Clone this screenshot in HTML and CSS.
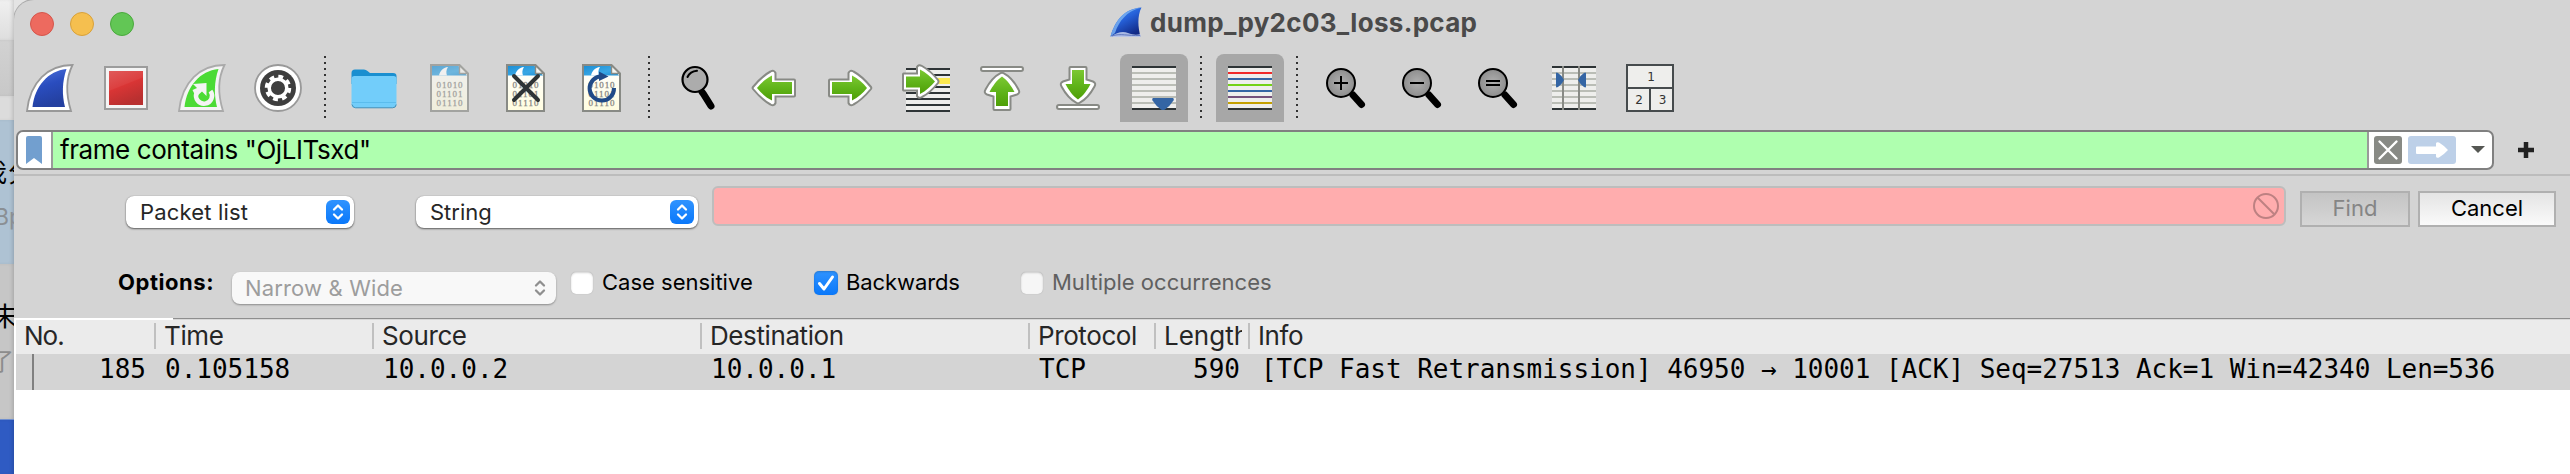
FILE: index.html
```html
<!DOCTYPE html>
<html lang="en">
<head>
<meta charset="utf-8">
<title>dump_py2c03_loss.pcap</title>
<link rel="stylesheet" href="styles.css">
</head>
<body>
<svg class="defs" width="0" height="0" aria-hidden="true">
  <defs>
    <linearGradient id="g-blue" x1="0" y1="0" x2="0.3" y2="1"><stop offset="0" stop-color="#4f74dc"/><stop offset=".5" stop-color="#2a4dbf"/><stop offset="1" stop-color="#2440a0"/></linearGradient>
    <linearGradient id="g-red" x1="0" y1="0" x2=".4" y2="1"><stop offset="0" stop-color="#e05a5a"/><stop offset=".49" stop-color="#dc4040"/><stop offset=".52" stop-color="#d93535"/><stop offset="1" stop-color="#b93030"/></linearGradient>
    <linearGradient id="g-green" x1="0" y1="0" x2="0" y2="1"><stop offset="0" stop-color="#7cc832"/><stop offset=".5" stop-color="#60b41a"/><stop offset="1" stop-color="#4e9e06"/></linearGradient>
    <linearGradient id="g-sky" x1="0" y1="0" x2="1" y2="1"><stop offset="0" stop-color="#1c8fd6"/><stop offset=".6" stop-color="#39a7e4"/><stop offset="1" stop-color="#1c8fd6"/></linearGradient>
    <linearGradient id="g-paper" x1="0" y1="0" x2="0" y2="1"><stop offset="0" stop-color="#ffffff"/><stop offset="1" stop-color="#fffde0"/></linearGradient>
    <linearGradient id="g-title" x1="0" y1="0" x2=".6" y2="1"><stop offset="0" stop-color="#4a9af5"/><stop offset=".5" stop-color="#2560d8"/><stop offset="1" stop-color="#122a86"/></linearGradient>
    <radialGradient id="g-lens"><stop offset="0" stop-color="#b0b0b0"/><stop offset="1" stop-color="#8e8e8e"/></radialGradient>
    <symbol id="file" viewBox="0 0 48 48">
      <path d="M5 1H33L42 10V47H5Z" fill="url(#g-paper)"/>
      <path d="M6 2H32.500L41 11.500H6Z" fill="url(#g-sky)"/>
      <path d="M13 11.500C14 7 17 3.500 22 3C20 6 20 9 21 11.500Z" fill="#fff"/>
      <path d="M5 1H33.500L42 9.500V47H5Z" fill="none" stroke="#888a85" stroke-width="2"/>
      <path d="M33.500 1.500V9.500H41.500Z" fill="#f4f4f0" stroke="#888a85" stroke-width="1.400"/>
      <g class="bits"><text x="10.500" y="23.500" textLength="26">01010</text><text x="10.500" y="32.500" textLength="26">01101</text><text x="10.500" y="41.500" textLength="26">01110</text></g>
    </symbol>
    <symbol id="arrow" viewBox="0 0 48 48">
      <path d="M4 15.500H22.500V9Q24 5.500 27.500 7.500C34 11 40 17 45 23Q45.800 24 45 25C40 31 34 37 27.500 40.500Q24 42.500 22.500 39V32.500H4Q3 32.500 3 31.500V16.500Q3 15.500 4 15.500Z" fill="#fff" stroke="#888a85" stroke-width="2"/>
      <path d="M6 18H26V11.500C32 14.500 37 19 41 24C37 29 32 33.500 26 36.500V30H6Z" fill="url(#g-green)"/>
    </symbol>
    <symbol id="arrow-up" viewBox="0 0 48 48">
      <path d="M15.500 45V32.500L9 30.500Q5.500 29 7.500 25.500C11 19 17 12 22.500 9.200Q24 8.500 25.500 9.200C31 12 37 19 40.500 25.500Q42.500 29 39 30.500L32.500 32.500V45Q32.500 46 31.500 46H16.500Q15.500 46 15.500 45Z" fill="#fff" stroke="#888a85" stroke-width="2"/>
      <path d="M18 42V28H11.500C14.500 22 19 16 24 12.500C29 16 33.500 22 36.500 28H30V42Z" fill="url(#g-green)"/>
      <rect x="3" y="3" width="42" height="4" rx="2" fill="#fff" stroke="#888a85" stroke-width="2"/>
    </symbol>
    <symbol id="lens" viewBox="0 0 48 48">
      <path d="M31 31L39.500 40.500" stroke="#000" stroke-width="7" stroke-linecap="round"/>
      <circle cx="19" cy="19" r="14" fill="url(#g-lens)" stroke="#000" stroke-width="2"/>
    </symbol>
    <symbol id="updown" viewBox="0 0 24 24"><path d="M8 9.500L12 5.500L16 9.500M8 14.500L12 18.500L16 14.500" fill="none" stroke="currentColor" stroke-width="2.300" stroke-linecap="round" stroke-linejoin="round"/></symbol>
  </defs>
</svg>
<div class="desktop">
  <div class="behind">
    <div class="b b1"></div><div class="b b2"></div><div class="b b3"></div>
    <div class="b b4"><span class="cj cj-name">我</span><span class="cj cj-name2">分</span><span class="cj cj-sub">Bp</span></div>
    <div class="b b5"><span class="cj cj-mo">末</span><span class="cj cj-le">了</span></div>
    <div class="b b6"></div>
  </div>
  <div class="window">
    <div class="titlebar">
      <div class="lights"><i class="light red"></i><i class="light yellow"></i><i class="light green"></i></div>
      <div class="title">
        <svg class="title-icon" viewBox="0 0 32 32"><path d="M.5 29.500C5 14 14 1.500 31.500 .500C27 9 28 21 30.500 29.500Z" fill="url(#g-title)"/><path d="M.5 29.500C5 14 14 2 30 1C17 4 9 14 5 26Z" fill="#7db4f2" opacity=".8"/><path d="M.5 30C7 25 13 24 18 26C23 28 27 28 30.500 27V30Z" fill="#c4d0f0" opacity=".85"/><path d="M2 29C10 26 18 29 30 28.500" stroke="#5f78c0" fill="none"/></svg>
        <span class="title-text">dump_py2c03_loss.pcap</span>
      </div>
    </div>
    <div class="toolbar">
      <span class="tool"><svg viewBox="0 0 48 48"><path d="M1 47C4 18 22 1 46.500 1C40 14 40 31 45 47Z" fill="#fff" stroke="#999" stroke-width="1.800"/><path d="M6.500 43C9 22 22 7 40.500 5C36 18 36 31 39 43Z" fill="url(#g-blue)"/></svg></span>
      <span class="tool"><svg viewBox="0 0 48 48"><rect x="3" y="3" width="42" height="42" fill="#f4f4f4" stroke="#9c9c9c" stroke-width="2"/><rect x="7" y="7" width="34" height="34" fill="url(#g-red)"/></svg></span>
      <span class="tool"><svg viewBox="0 0 48 48"><path d="M1 47C4 18 22 1 46.500 1C40 14 40 31 45 47Z" fill="#f4f4f4" stroke="#aaa" stroke-width="1.800"/><path d="M6.500 43C9 22 22 7 40.500 5C36 18 36 31 39 43Z" fill="#4bdb35"/><path d="M18.500 29A8 8 0 1 0 32.500 27" fill="none" stroke="#f4f4f4" stroke-width="4.500"/><path d="M15 20L28.500 19V32L24 27.500L18 33L14.500 26L19 24Z" fill="#f4f4f4"/></svg></span>
      <span class="tool"><svg viewBox="0 0 48 48"><circle cx="24" cy="24" r="23" fill="#fff" stroke="#999" stroke-width="1.800"/><circle cx="24" cy="24" r="18" fill="#3e3e3e"/><circle cx="24" cy="24" r="11.500" fill="none" stroke="#fff" stroke-width="3.500" stroke-dasharray="4.800 4.232"/><circle cx="24" cy="24" r="8.800" fill="none" stroke="#fff" stroke-width="3.500"/></svg></span>
      <span class="sep"></span>
      <span class="tool"><svg viewBox="0 0 48 48"><path d="M1.500 9Q1.500 5.500 5 5.500H14Q16 5.500 17.500 7L20 9H43Q46.500 9 46.500 12V20H1.500Z" fill="#1a8fd0"/><path d="M1.500 15Q1.500 12 4.500 12H43.500Q46.500 12 46.500 15V40Q46.500 44 43 44H5Q1.500 44 1.500 40Z" fill="#72cdfa"/><path d="M2 40.500Q3 43.800 5.500 43.800H42.500Q46 43.800 46.200 40.500" fill="none" stroke="#4a8fb4" stroke-width="1"/><path d="M2 38.500H46" stroke="#5bbced" stroke-width="1"/></svg></span>
      <span class="tool faded"><svg><use href="#file"/></svg></span>
      <span class="tool"><svg viewBox="0 0 48 48"><use href="#file"/><path d="M12 12L36 36M36 12L12 36" stroke="#2e3436" stroke-width="4" stroke-linecap="round"/></svg></span>
      <span class="tool"><svg viewBox="0 0 48 48"><use href="#file"/><path d="M36 24A12.200 12.200 0 1 1 24 12.200" fill="none" stroke="#204a87" stroke-width="4"/><path d="M21 7.500L30.500 12.500L21 17Z" fill="#204a87"/></svg></span>
      <span class="sep"></span>
      <span class="tool"><svg viewBox="0 0 48 48"><path d="M28 28L29.500 30L37 42" stroke="#000" stroke-width="7" stroke-linecap="round" stroke-linejoin="round"/><path d="M23 22L30 32" stroke="#000" stroke-width="3"/><circle cx="21" cy="15.500" r="12.500" fill="#acacac" stroke="#000" stroke-width="2.200"/><path d="M13.500 13Q16 7.500 23 6.800" fill="none" stroke="#000" stroke-width="2" stroke-linecap="round"/></svg></span>
      <span class="tool flip-x"><svg><use href="#arrow"/></svg></span>
      <span class="tool"><svg><use href="#arrow"/></svg></span>
      <span class="tool"><svg viewBox="0 0 48 48"><path fill="#eeeeec" d="M4 4H48V48H4Z"/><path fill="#fce94f" d="M30 14H48V20H30Z"/><path d="M4 5H48M4 11H48M4 23H48M4 29H48M4 35H48M4 41H48M4 47H48" stroke="#2e3436" stroke-width="2"/><path d="M1.500 9.500H15V3Q16.500 0 20 2C27 6 32 11 36 16Q37 17.500 36 19C32 24 27 29.500 20 33Q16.500 35 15 32V26.500H1.500Q1 26.500 1 25.500V10.500Q1 9.500 1.500 9.500Z" fill="#fff" stroke="#888a85" stroke-width="2"/><path d="M4 12.500H18V5.500C24 8.500 29 13 33 17.500C29 22 24 27 18 30V23.500H4Z" fill="url(#g-green)"/></svg></span>
      <span class="tool"><svg><use href="#arrow-up"/></svg></span>
      <span class="tool"><svg viewBox="0 0 48 48"><path d="M15.500 4V15.500L9 17.500Q5.500 19 7.500 22.500C11 29 17 36 22.500 38.800Q24 39.500 25.500 38.800C31 36 37 29 40.500 22.500Q42.500 19 39 17.500L32.500 15.500V4Q32.500 3 31.500 3H16.500Q15.500 3 15.500 4Z" fill="#fff" stroke="#888a85" stroke-width="2"/><path d="M18 6V20H11.500C14.500 26 19 32 24 35.500C29 32 33.500 26 36.500 20H30V6Z" fill="url(#g-green)"/><rect x="3" y="41" width="42" height="4" rx="2" fill="#fff" stroke="#888a85" stroke-width="2"/></svg></span>
      <span class="tool on"><svg viewBox="0 0 48 48"><path fill="#eeeeec" d="M2 2H46V46H2Z"/><path d="M2 9H46M2 15H46M2 21H46M2 27H46M2 33H46M2 39H46" stroke="#babdb6" stroke-width="2"/><path d="M2 3H46M2 45H46" stroke="#2e3436" stroke-width="2"/><path d="M23 34H43Q44.500 34.500 43.500 36.500Q40 42 35 45.500Q33 46.500 31 45.500Q26 42 22.500 36.500Q21.500 34.500 23 34Z" fill="#3465a4"/></svg></span>
      <span class="sep"></span>
      <span class="tool on"><svg viewBox="0 0 48 48"><path fill="#eeeeec" d="M2 2H46V46H2Z"/><path d="M2 3H46M2 45H46" stroke="#2e3436" stroke-width="2"/><path d="M2 9H46" stroke="#ef2929" stroke-width="2"/><path d="M2 15H46M2 27H46" stroke="#3465a4" stroke-width="2"/><path d="M2 21H46" stroke="#73d216" stroke-width="2"/><path d="M2 33H46" stroke="#75507b" stroke-width="2"/><path d="M2 39H46" stroke="#c4a000" stroke-width="2"/></svg></span>
      <span class="sep"></span>
      <span class="tool"><svg viewBox="0 0 48 48"><use href="#lens"/><path d="M12 19H26M19 12V26" stroke="#000" stroke-width="2"/></svg></span>
      <span class="tool"><svg viewBox="0 0 48 48"><use href="#lens"/><path d="M12 19H26" stroke="#000" stroke-width="2"/></svg></span>
      <span class="tool"><svg viewBox="0 0 48 48"><use href="#lens"/><path d="M12 17H26M12 21H26" stroke="#000" stroke-width="2"/></svg></span>
      <span class="tool"><svg viewBox="0 0 48 48"><path fill="#eeeeec" d="M2 2H46V46H2Z"/><path d="M2 9H46M2 15H46M2 21H46M2 27H46M2 33H46M2 39H46" stroke="#babdb6" stroke-width="2"/><path d="M2 3H46M2 45H46" stroke="#2e3436" stroke-width="2"/><path d="M13 2V46M29 2V46" stroke="#888a85" stroke-width="2"/><path d="M6 9.500Q6 8 8 9Q12 11.500 14 16Q12 20.500 8 23Q6 24 6 22.500ZM36 9.500Q36 8 34 9Q30 11.500 28 16Q30 20.500 34 23Q36 24 36 22.500Z" fill="#3465a4"/></svg></span>
      <span class="tool"><svg viewBox="0 0 48 48"><path d="M1 1H47V47H1Z" fill="#eeeeec" stroke="#464b4d" stroke-width="2"/><path d="M1 24H47M24 24V47" stroke="#464b4d" stroke-width="2"/><g class="pane"><text x="25" y="17">1</text><text x="13" y="40">2</text><text x="36.500" y="40">3</text></g></svg></span>
    </div>
    <div class="filter-row">
      <div class="filter">
        <span class="bookmark"><svg viewBox="0 0 16 28"><path d="M2 0H14Q16 0 16 2V28L8 22L0 28V2Q0 0 2 0Z" fill="#729fcf"/></svg></span>
        <span class="filter-text">frame contains "OjLITsxd"</span>
        <span class="filter-actions">
          <svg class="clear" viewBox="0 0 28 28"><rect width="28" height="28" rx="3" fill="#888a85"/><path d="M5.500 5.500L22.500 22.500M22.500 5.500L5.500 22.500" stroke="#fff" stroke-width="2.400" stroke-linecap="round"/></svg>
          <svg class="apply" viewBox="0 0 48 28"><rect width="48" height="28" rx="3" fill="#bdd0e8"/><path d="M9 10.500H28V7.500Q28.500 5.500 31 6.500Q36 9.500 40 14Q36 18.500 31 21.500Q28.500 22.500 28 20.500V18H9Q8 18 8 17V11.500Q8 10.500 9 10.500Z" fill="#fff"/></svg>
          <svg class="caret" viewBox="0 0 14 7"><path d="M0 0H14L7 7Z" fill="#555753"/></svg>
        </span>
      </div>
      <svg class="plus" viewBox="0 0 16 16"><path d="M0 8H16M8 0V16" stroke="#222" stroke-width="4.500"/></svg>
    </div>
    <div class="search">
      <div class="search-row">
        <div class="combo c1"><span class="s-packet">Packet list</span><svg class="knob"><use href="#updown"/></svg></div>
        <div class="combo c2"><span>String</span><svg class="knob"><use href="#updown"/></svg></div>
        <div class="find-input"><svg viewBox="0 0 28 28"><circle cx="14" cy="14" r="12" fill="none" stroke="#bd8182" stroke-width="2"/><path d="M5.500 5.500L22.500 22.500" stroke="#bd8182" stroke-width="2"/></svg></div>
        <div class="btn find">Find</div>
        <div class="btn cancel">Cancel</div>
      </div>
      <div class="options-row">
        <div class="lab o-lab">Options:</div>
        <div class="combo c3"><span>Narrow &amp; Wide</span><svg class="knob"><use href="#updown"/></svg></div>
        <i class="check k1"></i><div class="lab l-case">Case sensitive</div>
        <i class="check k2"><svg viewBox="0 0 24 24"><path d="M5.500 12.500L10 18L18.500 6" fill="none" stroke="#fff" stroke-width="3" stroke-linecap="round" stroke-linejoin="round"/></svg></i><div class="lab l-back">Backwards</div>
        <i class="check k3"></i><div class="lab dim">Multiple occurrences</div>
      </div>
    </div>
    <div class="rule"></div>
    <div class="table">
      <div class="row head">
        <div class="cell h-no">No.</div><div class="cell">Time</div><div class="cell">Source</div><div class="cell">Destination</div><div class="cell">Protocol</div><div class="cell"><div class="clip">Length</div></div><div class="cell">Info</div>
      </div>
      <div class="row data">
        <div class="cell num tree">185</div><div class="cell">0.105158</div><div class="cell">10.0.0.2</div><div class="cell">10.0.0.1</div><div class="cell">TCP</div><div class="cell num">590</div><div class="cell info">[TCP Fast Retransmission] 46950 → 10001 [ACK] Seq=27513 Ack=1 Win=42340 Len=536</div>
      </div>
    </div>
  </div>
</div>
</body>
</html>
```
FILE: styles.css
```css
* { box-sizing: border-box; }
body { margin: 0; background: #d4d4d4; font-family: Inter, "Noto Sans CJK SC", sans-serif; }
.defs { position: absolute; }
svg { display: block; }
.desktop { display: flex; width: 2570px; height: 474px; overflow: hidden; background: #e4e4e4; }

/* windows showing behind the left edge */
.behind { width: 14px; flex: none; }
.b { width: 14px; overflow: hidden; position: relative; box-shadow: inset -3px 0 4px -2px rgba(0,0,0,.18); }
.b1 { height: 40px; background: linear-gradient(#f0f0f0, #dedede); }
.b2 { height: 56px; background: linear-gradient(#d2d2d2, #c8c8c8); }
.b3 { height: 24px; background: #dcdcdc; }
.b4 { height: 144px; background: #aec2d3; }
.b5 { height: 155px; background: #c6c6c6; }
.b6 { height: 55px; background: #2f5bc3; border-top: 1px solid #6f8fd0; }
.cj { position: absolute; font: 26px/30px "Noto Sans CJK SC", sans-serif; white-space: nowrap; color: #000; }
.cj-name { left: -19px; top: 36px; }
.cj-name2 { left: 8px; top: 36px; }
.cj-sub { left: -6px; top: 82px; font: 23px/30px Inter, sans-serif; color: #8a8f94; }
.cj-mo { left: -8px; top: 36px; }
.cj-le { left: -10px; top: 81px; font-size: 24px; color: #8c8c8c; }

.window { flex: 1; min-width: 0; background: #d4d4d4; border-top-left-radius: 20px; box-shadow: 0 0 0 1px #aaa; }
.titlebar { height: 54px; display: flex; align-items: flex-start; }
.lights { display: flex; gap: 16px; padding: 12px 0 0 16px; width: 1096px; }
.light { width: 24px; height: 24px; border-radius: 50%; border: 1px solid; }
.red { background: #ed6a5f; border-color: #d5554b; }
.yellow { background: #f5bf4f; border-color: #d8a13a; }
.green { background: #62c655; border-color: #4aa93d; }
.title { display: flex; }
.title-icon { width: 32px; height: 32px; margin: 7px 8px 0 0; }
.title-text { font-weight: 700; font-size: 26px; line-height: 32px; letter-spacing: .3px; color: #4a4a4a; padding-top: 7px; }

.toolbar { display: flex; gap: 8px; padding-left: 2px; height: 76px; }
.tool { width: 68px; height: 68px; padding: 10px; }
.tool svg { width: 48px; height: 48px; }
.tool.on { background: #a7a7a7; border-radius: 8px 8px 0 0; }
.tool.faded { opacity: .65; }
.tool.flip-x { transform: scaleX(-1); }
.sep { width: 2px; height: 62px; margin: 2px 6px 0 4px; background: repeating-linear-gradient(#333 0 2px, transparent 2px 6px); }
.bits { font: 9px "Liberation Serif", serif; fill: #8a8a85; stroke: #8a8a85; stroke-width: .3; }
.pane { font: 12px "DejaVu Sans", sans-serif; fill: #333; text-anchor: middle; }

.filter-row { display: flex; align-items: flex-start; height: 44px; padding-left: 2px; }
.filter { display: flex; width: 2478px; height: 40px; border: 2px solid #808080; border-radius: 7px; background: #fff; overflow: hidden; }
.bookmark { width: 35px; border-right: 2px solid #9a9a9a; padding: 4px 0 0 8px; }
.bookmark svg { width: 16px; height: 28px; }
.filter-text { flex: 1; background: #afffaf; padding-left: 7px; font-size: 26px; line-height: 35px; letter-spacing: -.42px; color: #000; }
.filter-actions { width: 125px; border-left: 2px solid #9a9a9a; display: flex; padding: 4px 0 0 5px; }
.clear { width: 28px; height: 28px; }
.apply { width: 48px; height: 28px; margin-left: 6px; }
.caret { width: 14px; height: 7px; margin: 10px 0 0 15px; }
.plus { width: 16px; height: 16px; margin: 12px 0 0 24px; }

.search { border-top: 2px solid #bcbcbc; height: 144px; font-size: 22px; }
.search-row { display: flex; height: 95px; padding: 10px 0 0 112px; align-items: flex-start; }
.combo { display: flex; justify-content: space-between; height: 32px; border-radius: 8px; background: #fff; box-shadow: 0 1px 2px rgba(0,0,0,.55), 0 0 1px rgba(0,0,0,.3); padding: 4px 4px 0 14px; line-height: 25px; color: #262626; }
.knob { width: 24px; height: 24px; border-radius: 6px; background: linear-gradient(#2f93ff, #0a78fa); color: #fff; }
.s-packet { letter-spacing: .17px; }
.c1 { width: 228px; margin: 10px 62px 0 0; }
.c2 { width: 282px; margin: 10px 14px 0 0; }
.c3 { width: 324px; margin: 1px 15px 0 0; padding-left: 13px; letter-spacing: .15px; background: #f8f8f8; color: #9d9d9d; box-shadow: 0 1px 2px rgba(0,0,0,.35); }
.c3 .knob { background: none; color: #8f8f8f; }
.find-input { width: 1574px; height: 40px; border: 2px solid #bdbdbd; border-radius: 6px; background: #ffadae; display: flex; justify-content: flex-end; padding: 4px 4px 0 0; }
.find-input svg { width: 28px; height: 28px; }
.btn { height: 36px; margin-top: 5px; border: 2px solid #b0b0b0; text-align: center; line-height: 31px; }
.find { width: 110px; margin-left: 14px; background: linear-gradient(#c4c4c4, #d6d6d6); color: #858585; }
.cancel { width: 138px; margin-left: 8px; background: linear-gradient(#e4e4e4, #fafafa); color: #000; }
.options-row { display: flex; align-items: flex-start; padding-left: 104px; color: #000; }
.lab { line-height: 22px; white-space: nowrap; }
.o-lab { width: 114px; font-weight: 700; letter-spacing: .55px; }
.l-case { width: 151px; }
.l-back { width: 114px; letter-spacing: -.1px; }
.dim { color: #606060; }
.check { flex: none; width: 22px; height: 22px; margin-top: 1px; border-radius: 5px; background: #fff; box-shadow: inset 0 1px 2px rgba(0,0,0,.18), 0 0 1px rgba(0,0,0,.25); }
.k1 { margin-right: 9px; }
.k2 { width: 24px; height: 24px; margin: 0 8px 0 61px; background: linear-gradient(#2f93ff, #0a78fa); }
.k3 { margin: 1px 9px 0 61px; background: #f6f6f6; }

.rule { height: 2px; background: linear-gradient(#8e8e8e 50%, #d8d8d8 50%); border-left: 159px solid #fff; }
.table { padding-left: 2px; background: #fff; height: 154px; }
.row { display: grid; grid-template-columns: 140px 218px 328px 328px 126px 94px 1fr; }
.cell { white-space: nowrap; min-width: 0; }
.head { height: 34px; background: #ebebeb; font-size: 26px; letter-spacing: -.4px; color: #262626; }
.head .cell { padding-left: 8px; height: 26px; margin-top: 3px; line-height: 26px; border-right: 2px solid #c0c0c0; }
.head .cell:last-child { border: 0; }
.head .h-no { letter-spacing: -1px; }
.clip { width: 78px; height: 31px; overflow: hidden; letter-spacing: 0; }
.data { height: 36px; background: #d4d4d4; font: 26px/31px "DejaVu Sans Mono", monospace; color: #000; }
.data .cell { padding-left: 9px; }
.data .num { text-align: right; padding-right: 10px; }
.data .info { padding-left: 11px; letter-spacing: -.03px; }
.tree { background: linear-gradient(#808080, #808080) 16px 0 / 2px 100% no-repeat; }
```
